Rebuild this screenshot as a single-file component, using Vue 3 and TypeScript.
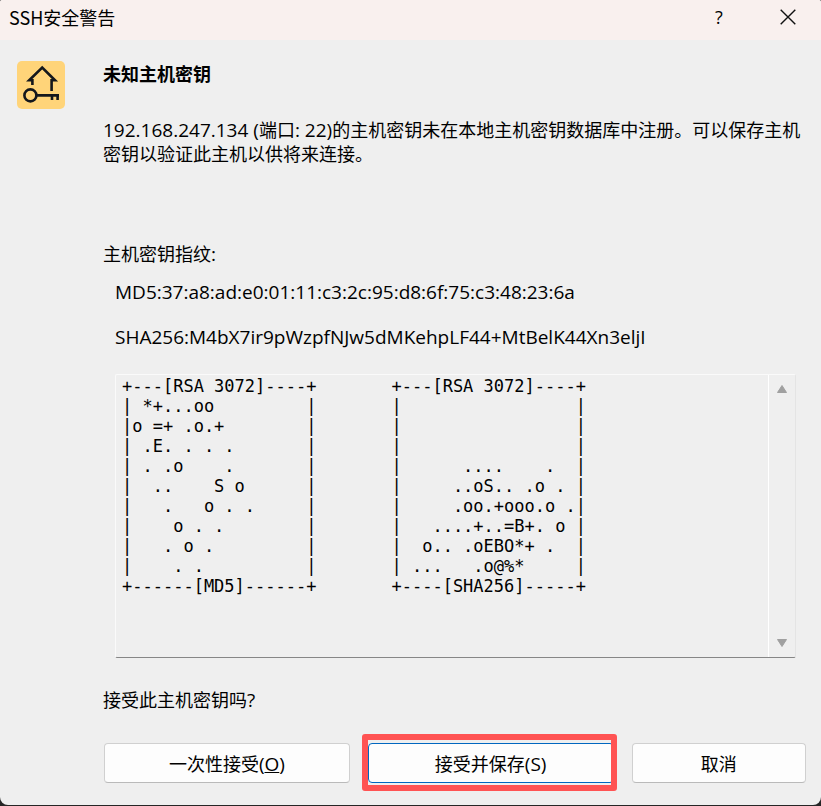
<script setup lang="ts">
interface RandomArt {
  name: string
  rows: string[]
}

const title = 'SSH安全警告'
const host = '192.168.247.134'
const port = 22

const md5 = 'MD5:37:a8:ad:e0:01:11:c3:2c:95:d8:6f:75:c3:48:23:6a'
const sha256 = 'SHA256:M4bX7ir9pWzpfNJw5dMKehpLF44+MtBelK44Xn3eljI'

const arts: RandomArt[] = [
  {
    name: 'MD5',
    rows: [
      '+---[RSA 3072]----+',
      '| *+...oo         |',
      '|o =+ .o.+        |',
      '| .E. . . .       |',
      '| . .o    .       |',
      '|  ..    S o      |',
      '|   .   o . .     |',
      '|    o . .        |',
      '|   . o .         |',
      '|    . .          |',
      '+------[MD5]------+',
    ],
  },
  {
    name: 'SHA256',
    rows: [
      '+---[RSA 3072]----+',
      '|                 |',
      '|                 |',
      '|                 |',
      '|      ....    .  |',
      '|     ..oS.. .o . |',
      '|     .oo.+ooo.o .|',
      '|   ....+..=B+. o |',
      '|  o.. .oEBO*+ .  |',
      '| ...   .o@%*     |',
      '+----[SHA256]-----+',
    ],
  },
]
</script>

<template>
  <main class="dialog" role="dialog" aria-labelledby="dialog-title">
    <header class="titlebar">
      <h1 id="dialog-title">{{ title }}</h1>
      <button class="caption" type="button" aria-label="帮助">?</button>
      <button class="caption close" type="button" aria-label="关闭">
        <svg width="16" height="16" viewBox="0 0 16 16" aria-hidden="true">
          <path d="M.7.7l14.6 14.6M15.3.7L.7 15.3" stroke="#111" stroke-width="1.4" />
        </svg>
      </button>
    </header>

    <div class="body">
      <svg class="badge" width="48" height="48" viewBox="0 0 48 48" aria-hidden="true">
        <rect width="48" height="48" rx="5" fill="#ffd479" />
        <g fill="none" stroke="#14171c" stroke-width="2.6">
          <path d="M15.400 24v-4.700H12.200L25.200 6.600L38 19.300H34.600V30" />
          <circle cx="13.400" cy="34.400" r="6" />
          <path d="M19.400 34.400H42M40.600 34.400V39M35 34.400V39" />
        </g>
      </svg>

      <section class="content">
        <h2>未知主机密钥</h2>
        <p class="message">
          <span class="latin">{{ host }} (</span>端口<span class="latin">: {{ port }})</span>的主机密钥未在本地主机密钥数据库中注册。可以保存主机密钥以验证此主机以供将来连接。
        </p>

        <p class="label">主机密钥指纹<span class="latin">:</span></p>
        <p class="hash">{{ md5 }}</p>
        <p class="hash">{{ sha256 }}</p>

        <div class="viewer">
          <div class="arts">
            <pre v-for="art in arts" :key="art.name">{{ art.rows.join('\n') }}</pre>
          </div>
          <div class="scrollbar">
            <button type="button" aria-label="向上滚动">
              <svg width="12" height="10" viewBox="0 0 12 10" aria-hidden="true">
                <path d="M6 1.500L10.500 8.500H1.500Z" fill="#a0a0a0" stroke="#a0a0a0" stroke-linejoin="round" />
              </svg>
            </button>
            <button type="button" aria-label="向下滚动">
              <svg width="12" height="10" viewBox="0 0 12 10" aria-hidden="true">
                <path d="M6 8.500L10.500 1.500H1.500Z" fill="#a0a0a0" stroke="#a0a0a0" stroke-linejoin="round" />
              </svg>
            </button>
          </div>
        </div>

        <p class="question">接受此主机密钥吗<span class="latin">?</span></p>
      </section>
    </div>

    <footer class="actions">
      <button class="action" type="button">一次性接受<span class="latin">(<u>O</u>)</span></button>
      <button class="action primary" type="button">接受并保存<span class="latin">(S)</span></button>
      <button class="action cancel" type="button">取消</button>
    </footer>
  </main>
</template>

<style>
body {
  margin: 0;
  background: #262626;
}
</style>

<style scoped>
.dialog {
  box-sizing: border-box;
  display: flex;
  flex-direction: column;
  min-height: calc(100vh - 1px);
  overflow: hidden;
  border-radius: 2px 2px 8px 8px;
  background: #efefef;
  color: #000;
  font: 18px/24px "Noto Sans CJK SC", sans-serif;
}

h1,
h2,
p,
pre {
  margin: 0;
}

button {
  padding: 0;
  border: 0;
  background: transparent;
  color: inherit;
  font: inherit;
}

.latin,
.hash {
  font-family: "Open Sans", "Noto Sans CJK SC", sans-serif;
  font-size: 19px;
}

.latin {
  line-height: 20px;
}

.titlebar {
  display: flex;
  align-items: center;
  box-sizing: border-box;
  height: 40px;
  padding-bottom: 6px;
  background: #f9f0ee;
}

h1 {
  flex: 1;
  padding-left: 9px;
  font-size: 18px;
  font-weight: 400;
}

.caption {
  display: flex;
  align-items: center;
  justify-content: center;
  width: 72px;
  height: 34px;
  font-family: "Open Sans", sans-serif;
}

.close {
  width: 66px;
}

.body {
  display: flex;
  flex: 1;
  gap: 38px;
  padding: 21px 15px 0 17px;
}

.badge {
  flex: none;
}

.content {
  display: flex;
  flex: 1;
  flex-direction: column;
  min-width: 0;
}

h2 {
  font-size: 18px;
  font-weight: 700;
}

.message {
  min-height: 100px;
  margin-top: 32px;
}

.label {
  margin-top: 24px;
}

.hash {
  margin-top: 15px;
  padding-left: 12px;
}

.hash + .hash {
  margin-top: 21px;
}

.viewer {
  display: flex;
  box-sizing: border-box;
  height: 284px;
  margin: 25px 10px 0 12px;
  border: 1px solid #fafafa;
  border-right-color: #e4e4e4;
  border-bottom-color: #868686;
  border-radius: 2px;
}

.arts {
  display: flex;
  flex: 1;
  gap: 75px;
  padding: 1px 6px;
}

pre {
  font: 17px/20px "DejaVu Sans Mono", monospace;
}

.scrollbar {
  display: flex;
  flex-direction: column;
  justify-content: space-between;
  width: 26px;
  border-left: 1px solid #fff;
}

.scrollbar button {
  display: flex;
  align-items: center;
  justify-content: center;
  height: 28px;
}

.question {
  margin-top: 29px;
}

.actions {
  display: flex;
  gap: 18px;
  padding: 32px 15px 22px 104px;
}

.action {
  position: relative;
  box-sizing: border-box;
  flex: 246 1 0;
  height: 40px;
  border: 1px solid #d0d0d0;
  border-bottom-color: #bababa;
  border-radius: 4px;
  background: #fdfdfd;
}

.primary {
  border-color: #0067c0;
}

.primary::after {
  position: absolute;
  inset: -10px -4px -9px -7px;
  border: 6px solid #ff5353;
  border-radius: 3px;
  content: "";
}

.cancel {
  flex-grow: 174;
}
</style>
